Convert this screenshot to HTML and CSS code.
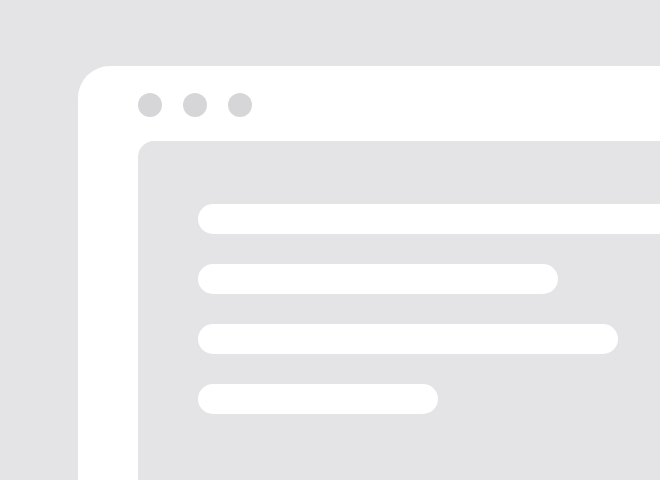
FILE: index.html
```html
<!DOCTYPE html>
<html>
<head>
<meta charset="utf-8">
<link rel="stylesheet" href="styles.css">
</head>
<body>
<div class="stage">
  <div class="window">
    <div class="dots">
      <span class="dot"></span>
      <span class="dot"></span>
      <span class="dot"></span>
    </div>
    <div class="content">
      <div class="bar bar-1"></div>
      <div class="bar bar-2"></div>
      <div class="bar bar-3"></div>
      <div class="bar bar-4"></div>
    </div>
  </div>
</div>
</body>
</html>
```
FILE: styles.css
```css
html, body {
  margin: 0;
  padding: 0;
  width: 660px;
  height: 480px;
  overflow: hidden;
  background: #e4e4e6;
}
.stage {
  box-sizing: border-box;
  width: 660px;
  height: 480px;
  padding: 66px 0 0 78px;
}
.window {
  box-sizing: border-box;
  width: 582px;
  height: 414px;
  background: #ffffff;
  border-top-left-radius: 32px;
  padding: 27px 0 0 60px;
  display: flex;
  flex-direction: column;
  gap: 24px;
}
.dots {
  display: flex;
  gap: 21px;
}
.dot {
  width: 24px;
  height: 24px;
  border-radius: 50%;
  background: #d6d6d8;
}
.content {
  flex: 1;
  background: #e4e4e6;
  border-top-left-radius: 16px;
  padding: 63px 0 0 60px;
  display: flex;
  flex-direction: column;
  gap: 30px;
}
.bar {
  height: 30px;
  border-radius: 15px;
  background: #ffffff;
}
.bar-1 { width: 462px; border-radius: 15px 0 0 15px; }
.bar-2 { width: 360px; }
.bar-3 { width: 420px; }
.bar-4 { width: 240px; }
```
